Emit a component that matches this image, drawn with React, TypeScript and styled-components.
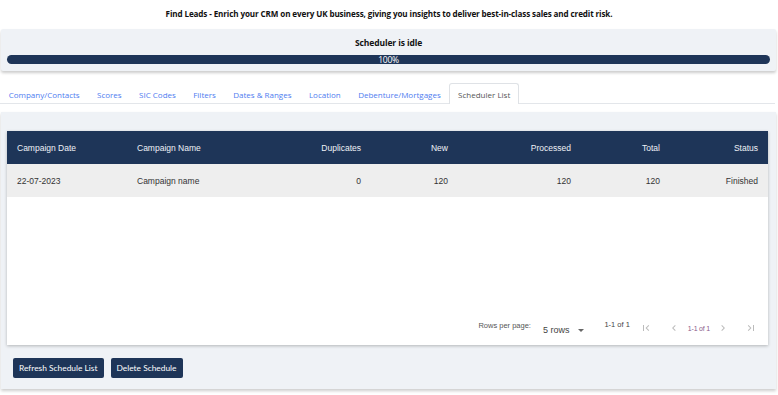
import React from "react";
import styled, { createGlobalStyle } from "styled-components";

const Global = createGlobalStyle`
  html, body { margin: 0; padding: 0; background: #ffffff; }
  body { width: 778px; height: 395px; overflow: hidden; font-family: "Liberation Sans", Arial, sans-serif; }
  * { box-sizing: border-box; }
`;

const NAVY = "#1e3558";

const Page = styled.div`
  display: flex;
  flex-direction: column;
  width: 778px;
`;

const Title = styled.div`
  height: 29px;
  display: flex;
  align-items: center;
  justify-content: center;
  font-family: "Open Sans", sans-serif;
  font-weight: 700;
  font-size: 8.1px;
  letter-spacing: -0.12px;
  color: #111;
  padding-bottom: 2px;
`;

const StatusPanel = styled.div`
  margin: 0 2px 0 1px;
  height: 42px;
  background: #eff2f6;
  box-shadow: 0 2px 3px rgba(0, 0, 0, 0.2);
  border-radius: 2px;
  display: flex;
  flex-direction: column;
  align-items: stretch;
  padding: 8px 6px 0 6px;
`;

const StatusText = styled.div`
  text-align: center;
  font-family: "Open Sans", sans-serif;
  font-weight: 700;
  font-size: 8.5px;
  letter-spacing: -0.1px;
  color: #111;
  height: 16px;
`;

const Progress = styled.div`
  height: 9px;
  margin-top: 2px;
  border-radius: 5px;
  background: ${NAVY};
  color: #fff;
  font-family: "Open Sans", sans-serif;
  font-size: 8.5px;
  line-height: 9px;
  text-align: center;
  letter-spacing: -0.3px;
`;

const Tabs = styled.div`
  display: flex;
  align-items: flex-end;
  margin: 12px 3px 0 0;
  height: 21px;
  border-bottom: 1px solid #e3e6ea;
`;

const Tab = styled.div<{ $active?: boolean }>`
  font-family: "Open Sans", sans-serif;
  font-size: 8px;
  height: 21px;
  display: flex;
  align-items: center;
  padding: 0 7.7px;
  color: ${(p) => (p.$active ? "#555" : "#4f7df0")};
  background: ${(p) => (p.$active ? "#fff" : "transparent")};
  border: 1px solid ${(p) => (p.$active ? "#dfe2e6" : "transparent")};
  border-bottom: none;
  border-radius: 3px 3px 0 0;
  margin-bottom: -1px;
`;

const Main = styled.div`
  margin: 8px 2px 0 1px;
  height: 277px;
  background: #eff2f6;
  box-shadow: 0 2px 3px rgba(0, 0, 0, 0.2);
  padding: 19px 8px 0 6px;
  display: flex;
  flex-direction: column;
`;

const Card = styled.div`
  background: #fff;
  height: 214px;
  box-shadow: 0 1px 3px rgba(0, 0, 0, 0.25);
  display: flex;
  flex-direction: column;
`;

const Grid = styled.div`
  display: grid;
  grid-template-columns: 120px 100px 134px 87px 123px 89px 98px;
  align-items: center;
  font-family: "Liberation Sans", Arial, sans-serif;
  font-size: 8.5px;
`;

const HeadRow = styled(Grid)`
  height: 33px;
  background: ${NAVY};
  color: #eef1f6;
`;

const BodyRow = styled(Grid)`
  height: 33px;
  background: #eeeeee;
  color: #333;
`;

const Cell = styled.div<{ $right?: boolean }>`
  text-align: ${(p) => (p.$right ? "right" : "left")};
  padding-left: ${(p) => (p.$right ? "0" : "10px")};
  white-space: nowrap;
`;

const Spacer = styled.div`
  flex: 1;
`;

const Pagination = styled.div`
  height: 24px;
  display: flex;
  align-items: flex-start;
  justify-content: flex-end;
  padding-right: 11px;
  font-family: "Liberation Sans", Arial, sans-serif;
  color: #555;
`;

const Small = styled.span`
  font-size: 7.5px;
`;

const RowsSelect = styled.span`
  display: flex;
  align-items: center;
  font-size: 9px;
  color: #444;
  margin: 4px 0 0 12px;
  gap: 9px;
`;

const Caret = styled.span`
  width: 0;
  height: 0;
  border-left: 3px solid transparent;
  border-right: 3px solid transparent;
  border-top: 3px solid #666;
`;

const Range = styled.span`
  font-size: 7.5px;
  margin: -1px 0 0 20px;
  color: #444;
`;

const Nav = styled.span`
  display: flex;
  align-items: center;
  margin: 1px 0 0 10px;
  color: #bbb;
`;

const NavIcon = styled.svg`
  width: 12px;
  height: 12px;
  display: block;
`;

const NavGap = styled.span<{ $w: number }>`
  width: ${(p) => p.$w}px;
`;

const PageInfo = styled.span`
  font-size: 7px;
  color: #8a5a8a;
  letter-spacing: -0.2px;
`;

const Buttons = styled.div`
  display: flex;
  gap: 7px;
  padding: 13px 0 0 6px;
`;

const Button = styled.button`
  background: ${NAVY};
  color: #fff;
  border: none;
  border-radius: 2px;
  height: 20px;
  padding: 0 6px;
  font-family: Lato, sans-serif;
  font-size: 8.4px;
  cursor: pointer;
`;

const FirstIcon = () => (
  <NavIcon viewBox="0 0 24 24">
    <path d="M18.4 16.6 13.8 12l4.6-4.6L17 6l-6 6 6 6zM6 6h2v12H6z" fill="currentColor" />
  </NavIcon>
);
const PrevIcon = () => (
  <NavIcon viewBox="0 0 24 24">
    <path d="M15.4 7.4 14 6l-6 6 6 6 1.4-1.4-4.6-4.6z" fill="currentColor" />
  </NavIcon>
);
const NextIcon = () => (
  <NavIcon viewBox="0 0 24 24">
    <path d="M10 6 8.6 7.4l4.6 4.6-4.6 4.6L10 18l6-6z" fill="currentColor" />
  </NavIcon>
);
const LastIcon = () => (
  <NavIcon viewBox="0 0 24 24">
    <path d="M5.6 7.4 10.2 12l-4.6 4.6L7 18l6-6-6-6zM16 6h2v12h-2z" fill="currentColor" />
  </NavIcon>
);

const tabs = [
  "Company/Contacts",
  "Scores",
  "SIC Codes",
  "Filters",
  "Dates & Ranges",
  "Location",
  "Debenture/Mortgages",
  "Scheduler List",
];

export default function App() {
  return (
    <Page>
      <Global />
      <Title>
        Find Leads - Enrich your CRM on every UK business, giving you insights to deliver best-in-class sales and credit risk.
      </Title>
      <StatusPanel>
        <StatusText>Scheduler is idle</StatusText>
        <Progress>100%</Progress>
      </StatusPanel>
      <Tabs>
        {tabs.map((t) => (
          <Tab key={t} $active={t === "Scheduler List"}>
            {t}
          </Tab>
        ))}
      </Tabs>
      <Main>
        <Card>
          <HeadRow>
            <Cell>Campaign Date</Cell>
            <Cell>Campaign Name</Cell>
            <Cell $right>Duplicates</Cell>
            <Cell $right>New</Cell>
            <Cell $right>Processed</Cell>
            <Cell $right>Total</Cell>
            <Cell $right>Status</Cell>
          </HeadRow>
          <BodyRow>
            <Cell>22-07-2023</Cell>
            <Cell>Campaign name</Cell>
            <Cell $right>0</Cell>
            <Cell $right>120</Cell>
            <Cell $right>120</Cell>
            <Cell $right>120</Cell>
            <Cell $right>Finished</Cell>
          </BodyRow>
          <Spacer />
          <Pagination>
            <Small>Rows per page:</Small>
            <RowsSelect>
              5 rows <Caret />
            </RowsSelect>
            <Range>1-1 of 1</Range>
            <Nav>
              <FirstIcon />
              <NavGap $w={16} />
              <PrevIcon />
              <NavGap $w={8} />
              <PageInfo>1-1 of 1</PageInfo>
              <NavGap $w={7} />
              <NextIcon />
              <NavGap $w={16} />
              <LastIcon />
            </Nav>
          </Pagination>
        </Card>
        <Buttons>
          <Button>Refresh Schedule List</Button>
          <Button>Delete Schedule</Button>
        </Buttons>
      </Main>
    </Page>
  );
}
